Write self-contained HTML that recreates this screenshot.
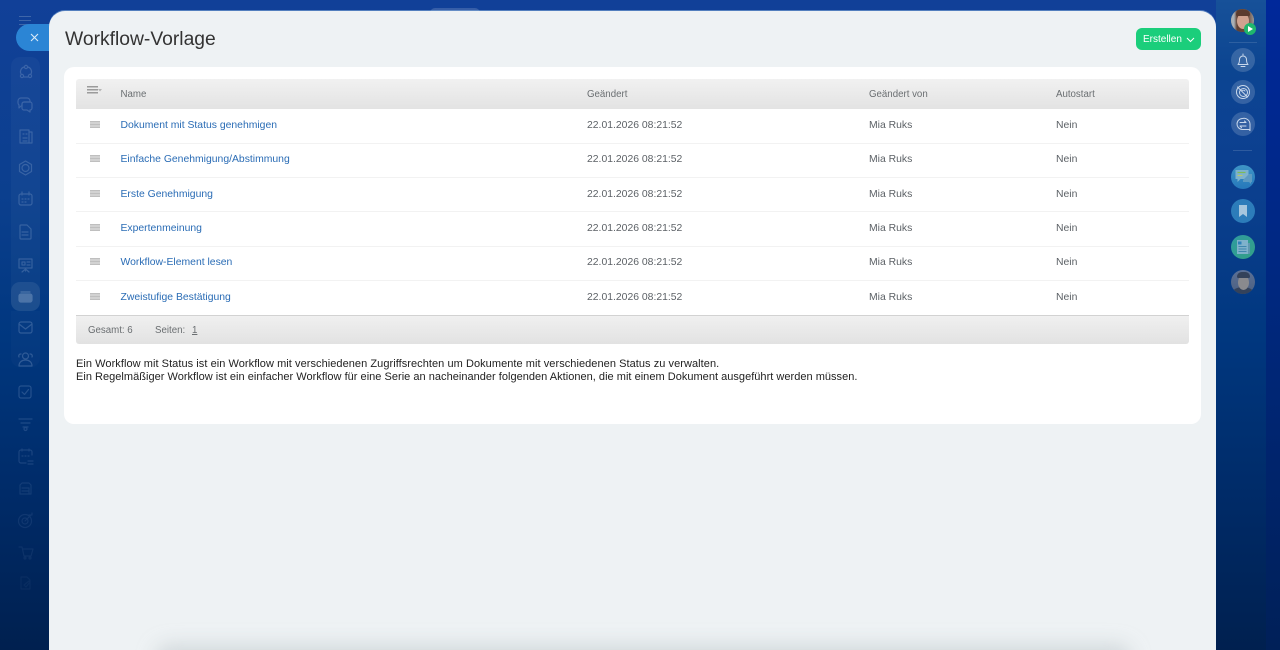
<!DOCTYPE html>
<html lang="de"><head><meta charset="utf-8"><title>Workflow-Vorlage</title>
<style>
html,body{margin:0;padding:0;width:1280px;height:650px;overflow:hidden}
#root{position:absolute;left:0;top:0;width:1280px;height:650px;overflow:hidden;font-family:"Liberation Sans",sans-serif;background:linear-gradient(180deg,#114098 0%,#0b3f8e 30%,#00377f 52%,#002a66 78%,#00204f 100%)}
div,a,span{position:absolute;white-space:nowrap}
.rcol{left:1266px;top:0;width:14px;height:650px;background:linear-gradient(180deg,#00289a 0,#00287f 45%,#002058 100%)}
.rtop{left:1216px;top:0;width:50px;height:170px;background:linear-gradient(180deg,#175199 0,#0c4591 40%,rgba(5,60,130,0) 100%)}
.slider{left:49px;top:11px;width:1167px;height:639px;background:#eef2f4;border-radius:16px 16px 0 0;box-shadow:0 -1px 0 rgba(150,190,230,.5);overflow:hidden}
.card{left:64px;top:67px;width:1137px;height:357px;background:#fff;border-radius:10px}
h1{position:absolute;margin:0;left:65px;top:28px;font-size:19.3px;line-height:23px;font-weight:400;color:#333;white-space:nowrap}
.btn{left:1136px;top:28px;width:65px;height:22px;background:#1bce7b;border-radius:6px;color:#fff;font-size:10px;line-height:23px}
.head{left:76px;top:79px;width:1113px;height:30px;border-radius:3px 3px 0 0;background:linear-gradient(180deg,#f1f1f1,#e3e3e3)}
.foot{left:76px;top:315px;width:1113px;height:29px;border-radius:0 0 3px 3px;border-top:1px solid #d2d2d2;box-sizing:border-box;background:linear-gradient(180deg,#f0f0f0,#e2e2e2)}
.t{font-size:10.4px;line-height:12px;color:#5c6166}
.h{color:#6a6e71;font-size:9.7px}
.l{color:#2a6cb5}
.sep{left:76px;width:1113px;height:1px;background:#f2f2f2}
.g{left:90px;width:10px;height:7px;background:linear-gradient(180deg,#bfbfbf 0,#bfbfbf 1.5px,#e4e4e4 1.5px,#e4e4e4 2.5px,#bfbfbf 2.5px,#bfbfbf 4.5px,#e4e4e4 4.5px,#e4e4e4 5.5px,#bfbfbf 5.5px)}
.d{font-size:11px;line-height:13px;color:#222;left:76px}
.shadow{left:112px;top:639px;width:965px;height:20px;border-radius:10px;background:#dbdfe2;box-shadow:0 0 18px 6px rgba(190,198,203,.55)}
svg{position:absolute;overflow:visible}
.ic{fill:none;stroke:#8fa9cf;stroke-width:1.2;stroke-linecap:round;stroke-linejoin:round}
</style></head><body><div id="root">
<div class="rtop"></div><div class="rcol"></div>
<div style="left:430px;top:8px;width:50px;height:6px;background:rgba(255,255,255,.16);border-radius:5px 5px 0 0"></div>

<div style="left:11px;top:57px;width:29px;height:254px;background:rgba(255,255,255,.03);border-radius:9px"></div>
<div style="left:11px;top:282px;width:29px;height:29px;background:rgba(255,255,255,.08);border-radius:9px"></div>
<div style="left:11px;top:311px;width:29px;height:56px;background:rgba(255,255,255,.02);border-radius:0 0 9px 9px"></div>
<div style="left:19px;top:16px;width:12px;height:9px;background:repeating-linear-gradient(180deg,#5d7fb5 0,#5d7fb5 1px,transparent 1px,transparent 4px);opacity:.6"></div>

<svg class="ic" style="left:0;top:0;opacity:.3" width="50" height="650">
<g><path d="M21 74a5 5 0 0 1 3-7m4 0a5 5 0 0 1 3 7m-3 3h-4"/><circle cx="26" cy="67" r="1.600"/><circle cx="22" cy="76" r="1.600"/><circle cx="30" cy="76" r="1.600"/></g>
<path d="M21 98h6a3 3 0 0 1 3 3v1h-6a2 2 0 0 0-2 2v2h-1l-2 2v-3a3 3 0 0 1-1-2v-2a3 3 0 0 1 3-3z"/><path d="M24 102h6a2 2 0 0 1 2 2v4a2 2 0 0 1-2 2v2l-3-2h-3a2 2 0 0 1-2-2v-4a2 2 0 0 1 2-2z"/>
<path d="M20 130h9v13h-9zM29 132h3v11h-3M23 134h1m2 0h1M23 138h4M23 141h4"/>
<path d="M25.500 161l6 3.500v7l-6 3.500-6-3.500v-7z"/><circle cx="25.500" cy="168" r="3.500"/>
<rect x="19" y="194" width="13" height="11" rx="2"/><path d="M22 192v3M29 192v3M22 199h1M25 199h1M28 199h1M22 202h1M25 202h1"/>
<path d="M21 225h6l4 4v9a1 1 0 0 1-1 1h-9a1 1 0 0 1-1-1v-12a1 1 0 0 1 1-1zM22 232h6M22 235h6"/>
<path d="M19 259h13v9H19zM25.500 268v3M22 272l3.500-3 3.500 3M22 262h3v3h-3zM27 262h3M27 265h3"/>
<g stroke="#b9cbe4" fill="#b9cbe4"><rect x="19" y="294" width="13" height="8" rx="2"/><path d="M21 292h9" fill="none"/></g>
<rect x="19" y="322" width="13" height="11" rx="2"/><path d="M19 324l6.500 5 6.500-5"/>
<circle cx="25.500" cy="356" r="3"/><path d="M19 366c0-4 3-6 6.500-6s6.500 2 6.500 6zM21 354a2 2 0 0 0-2 3M30 354a2 2 0 0 1 2 3"/>
<g opacity=".85"><rect x="19" y="386" width="12" height="12" rx="2"/><path d="M22 392l2.500 2.500 4-5"/></g>
<g opacity=".7"><path d="M19 419h13M21 423h9M23 427h5"/><circle cx="25.500" cy="429" r="1.500"/></g>
<g opacity=".6"><path d="M32 455v-3a2 2 0 0 0-2-2H21a2 2 0 0 0-2 2v9a2 2 0 0 0 2 2h5M22 449v2M29 449v2M22 456h1M25 456h1M28 456h1M28 461h5M28 464h5"/></g>
<g opacity=".45"><path d="M20 494v-9l2-2h7l2 2v9zM22 488h7v6M22 491h7"/></g>
<g opacity=".38"><circle cx="25" cy="521" r="6.500"/><circle cx="25" cy="521" r="3"/><path d="M25 521l6-6M29 515h3v-2"/></g>
<g opacity=".3"><path d="M19 547h3l2 9h7l2-7H23"/><circle cx="25" cy="558" r="1"/><circle cx="30" cy="558" r="1"/></g>
<g opacity=".22"><path d="M21 577h6l3 3v9H21zM24 585l5-4 1 1-4 5z"/></g>
</svg>

<div style="left:16px;top:24px;width:50px;height:27px;background:#2b85d5;border-radius:14px"></div>
<svg style="left:30px;top:33px" width="10" height="10"><path d="M1 1l7 7M8 1L1 8" stroke="#dcebf8" stroke-width="1.100" fill="none"/></svg>

<div class="slider"><div class="shadow"></div></div>
<div class="card"></div>
<h1>Workflow-Vorlage</h1>
<div class="btn"><span style="left:7px;top:0">Erstellen</span>
<svg style="left:50px;top:9px" width="9" height="6"><path d="M1 1l3.500 3.500L8 1" stroke="#fff" stroke-width="1" fill="none"/></svg></div>

<div class="head"></div>
<div style="left:87px;top:86px;width:11px;height:8px;background:linear-gradient(180deg,#9b9b9b 0,#9b9b9b 1.500px,transparent 1.500px,transparent 3px,#9b9b9b 3px,#9b9b9b 4.500px,transparent 4.500px,transparent 6px,#9b9b9b 6px,#9b9b9b 7.500px,transparent 7.500px)"></div>
<svg style="left:98px;top:89px" width="4" height="3"><path d="M0 0h4L2 2.500z" fill="#b5b5b5"/></svg>
<span class="t h" style="left:120.500px;top:89px">Name</span>
<span class="t h" style="left:587px;top:89px">Geändert</span>
<span class="t h" style="left:869px;top:89px">Geändert von</span>
<span class="t h" style="left:1056px;top:89px">Autostart</span>

<div class="g" style="top:121px"></div>
<a class="t l" style="left:120.500px;top:120px">Dokument mit Status genehmigen</a>
<span class="t" style="left:587px;top:120px">22.01.2026 08:21:52</span><span class="t" style="left:869px;top:120px">Mia Ruks</span><span class="t" style="left:1056px;top:120px">Nein</span>
<div class="sep" style="top:143px"></div>

<div class="g" style="top:155px"></div>
<a class="t l" style="left:120.500px;top:154px">Einfache Genehmigung/Abstimmung</a>
<span class="t" style="left:587px;top:154px">22.01.2026 08:21:52</span><span class="t" style="left:869px;top:154px">Mia Ruks</span><span class="t" style="left:1056px;top:154px">Nein</span>
<div class="sep" style="top:177px"></div>

<div class="g" style="top:190px"></div>
<a class="t l" style="left:120.500px;top:189px">Erste Genehmigung</a>
<span class="t" style="left:587px;top:189px">22.01.2026 08:21:52</span><span class="t" style="left:869px;top:189px">Mia Ruks</span><span class="t" style="left:1056px;top:189px">Nein</span>
<div class="sep" style="top:211px"></div>

<div class="g" style="top:224px"></div>
<a class="t l" style="left:120.500px;top:223px">Expertenmeinung</a>
<span class="t" style="left:587px;top:223px">22.01.2026 08:21:52</span><span class="t" style="left:869px;top:223px">Mia Ruks</span><span class="t" style="left:1056px;top:223px">Nein</span>
<div class="sep" style="top:246px"></div>

<div class="g" style="top:258px"></div>
<a class="t l" style="left:120.500px;top:257px">Workflow-Element lesen</a>
<span class="t" style="left:587px;top:257px">22.01.2026 08:21:52</span><span class="t" style="left:869px;top:257px">Mia Ruks</span><span class="t" style="left:1056px;top:257px">Nein</span>
<div class="sep" style="top:280px"></div>

<div class="g" style="top:293px"></div>
<a class="t l" style="left:120.500px;top:292px">Zweistufige Bestätigung</a>
<span class="t" style="left:587px;top:292px">22.01.2026 08:21:52</span><span class="t" style="left:869px;top:292px">Mia Ruks</span><span class="t" style="left:1056px;top:292px">Nein</span>

<div class="foot"></div>
<span class="t h" style="left:88px;top:325px">Gesamt: 6</span>
<span class="t h" style="left:155px;top:325px">Seiten:</span>
<span class="t h" style="left:192px;top:325px;text-decoration:underline">1</span>

<div class="d" style="top:358px;letter-spacing:.054px">Ein Workflow mit Status ist ein Workflow mit verschiedenen Zugriffsrechten um Dokumente mit verschiedenen Status zu verwalten.</div>
<div class="d" style="top:371px;letter-spacing:.023px">Ein Regelmäßiger Workflow ist ein einfacher Workflow für eine Serie an nacheinander folgenden Aktionen, die mit einem Dokument ausgeführt werden müssen.</div>

<!-- right panel -->
<div style="left:1231px;top:9px;width:23px;height:23px;border-radius:50%;overflow:hidden;background:#8f6d5c">
<div style="left:0;top:0;width:23px;height:23px;background:linear-gradient(90deg,#a9b0b6 0,#a9b0b6 3px,#5f4034 6px,#6b4a3a 17px,#9a9a9a 23px)"></div>
<div style="left:6px;top:4px;width:12px;height:16px;border-radius:50%;background:#cfa28f"></div>
<div style="left:5px;top:1px;width:14px;height:6px;border-radius:7px 7px 2px 2px;background:#5a3b2e"></div>
</div>
<div style="left:1244px;top:23px;width:12px;height:12px;border-radius:50%;background:#1fb76d"></div>
<svg style="left:1248px;top:26px" width="5" height="6"><path d="M0 0l5 3-5 3z" fill="#fff"/></svg>
<div style="left:1229px;top:42px;width:28px;height:1px;background:rgba(255,255,255,.12)"></div>

<div style="left:1231px;top:48px;width:24px;height:24px;border-radius:50%;background:rgba(255,255,255,.17)"></div>
<div style="left:1231px;top:80px;width:24px;height:24px;border-radius:50%;background:rgba(255,255,255,.17)"></div>
<div style="left:1231px;top:112px;width:24px;height:24px;border-radius:50%;background:rgba(255,255,255,.17)"></div>
<svg style="left:1231px;top:48px" width="24" height="88" fill="none" stroke="#c9d8ec" stroke-width="1" stroke-linecap="round" stroke-linejoin="round">
<path d="M7 16.500c1.500-1.500 1.500-3 1.500-5a3.500 3.500 0 0 1 7 0c0 2 0 3.500 1.500 5zM10 18.500h4M12 6v1"/>
<circle cx="12" cy="44" r="6.500"/><circle cx="12.500" cy="44.500" r="4"/><path d="M6.500 39l10 10M10.500 43a2.500 2.500 0 0 1 3.500 0"/>
<path d="M11.500 70.500a5.500 5.500 0 0 0 0 11h6.500l1 1v-6.500a6 6 0 0 0-7.500-5.500z"/><path d="M9 74.500h6l-1.500-1.500M15 78H9l1.500 1.500"/>
</svg>
<div style="left:1233px;top:150px;width:19px;height:1px;background:rgba(255,255,255,.14)"></div>

<div style="left:1231px;top:165px;width:24px;height:24px;border-radius:50%;background:linear-gradient(180deg,#3f95c6,#2678bb)"></div>
<svg style="left:1231px;top:165px" width="24" height="24"><path d="M4.500 5h13v9h-8l-3 3v-3h-2z" fill="#7db2cd"/><path d="M18 9h3v8h-1v2l-2-2h-6v-2" fill="#5d9ac2"/><path d="M6.500 7.500h8" stroke="#7cbb5a" stroke-width="1.200"/><path d="M6.500 10.500h5" stroke="#b9c76a" stroke-width="1.200"/></svg>
<div style="left:1231px;top:199px;width:24px;height:24px;border-radius:50%;background:#2c7cba"></div>
<svg style="left:1231px;top:199px" width="24" height="24"><path d="M8 6h8v12l-4-3-4 3z" fill="#a5c6de"/></svg>
<div style="left:1231px;top:235px;width:24px;height:24px;border-radius:50%;background:linear-gradient(135deg,#2f9ba0,#33a086)"></div>
<svg style="left:1231px;top:235px" width="24" height="24"><path d="M6 5h11v14H6z" fill="#7fb2cb"/><path d="M17 8h2v10a1 1 0 0 1-1 1h-1z" fill="#5e98b0"/><path d="M7 6.500h3.500v3H7z" fill="#2f82bb"/><path d="M7.500 11.500h8M7.500 14h8M7.500 16.500h8" stroke="#3f87ae"/></svg>
<div style="left:1231px;top:270px;width:24px;height:24px;border-radius:50%;overflow:hidden;background:linear-gradient(180deg,#5b7096,#4d6080)">
<div style="left:2px;top:17px;width:20px;height:10px;border-radius:50%;background:#34425a"></div>
<div style="left:7px;top:5px;width:11px;height:15px;border-radius:50%;background:#8a8a8e"></div>
<div style="left:6px;top:2px;width:13px;height:6px;border-radius:7px 7px 2px 2px;background:#34425a"></div>
</div>
</div></body></html>
